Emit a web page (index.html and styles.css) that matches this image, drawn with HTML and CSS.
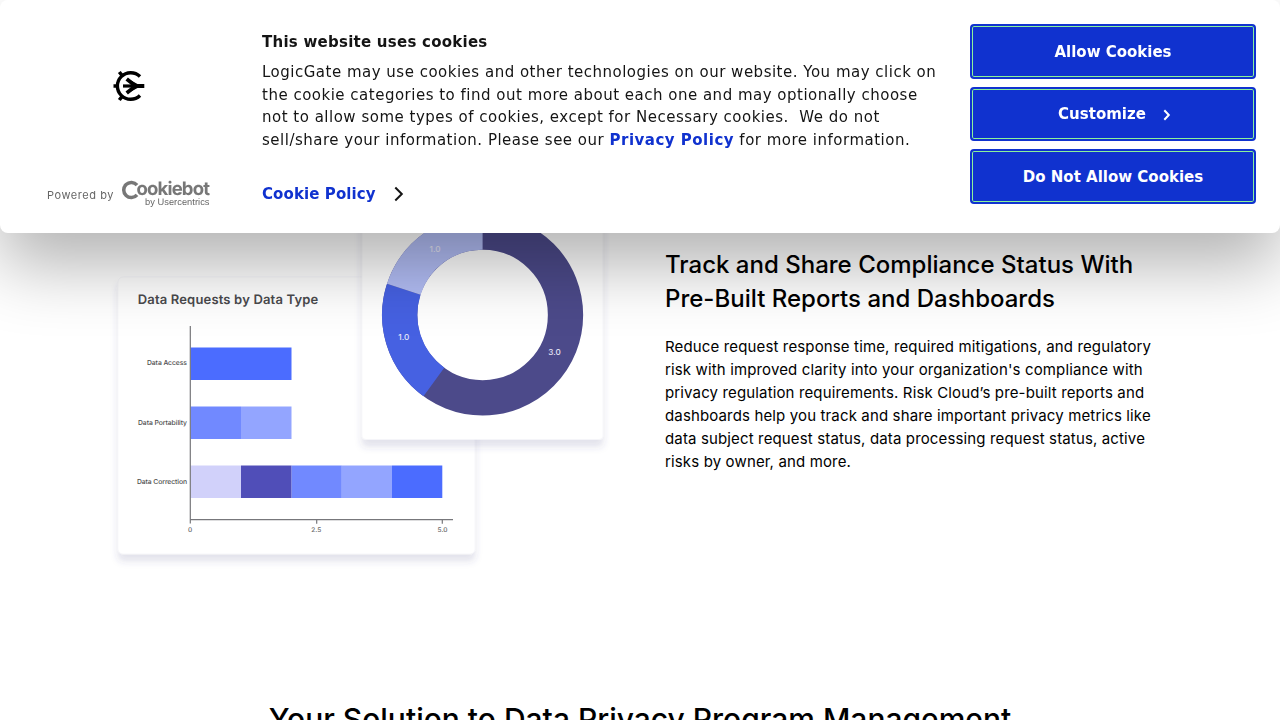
FILE: index.html
```html
<!DOCTYPE html>
<html lang="en">
<head>
<meta charset="utf-8">
<title>Data Privacy</title>
<link rel="stylesheet" href="styles.css">
</head>
<body>
<main class="page">
  <section class="feature">
    <svg class="charts" width="500" height="580" viewBox="110 0 500 580">
      <defs>
        <filter id="card-shadow" x="-10%" y="-10%" width="120%" height="125%">
          <feDropShadow dx="0" dy="7" stdDeviation="3.500" flood-color="#3c3c82" flood-opacity=".15"/>
        </filter>
      </defs>
      <rect class="card" x="118" y="277" width="357" height="277" rx="5"/>
      <text class="chart-title" x="137.700" y="304" textLength="180.500">Data Requests by Data Type</text>
      <g class="row-label">
        <text x="187" y="365" textLength="40">Data Access</text>
        <text x="187" y="424.500" textLength="49">Data Portability</text>
        <text x="187" y="484" textLength="50">Data Correction</text>
      </g>
      <path fill="#4b6cff" d="M190.500 347.500h101v32.500h-101zM392 465.500h50.300v32.500H392z"/>
      <path fill="#7189ff" d="M190.500 406.500h50.500v32.500h-50.500zM291.400 465.500h50.400v32.500h-50.400z"/>
      <path fill="#93a5ff" d="M241 406.500h50.500v32.500H241zM341.800 465.500H392v32.500h-50.200z"/>
      <path fill="#d1d1fa" d="M190.500 465.500H241v32.500h-50.500z"/>
      <path fill="#504eb8" d="M241 465.500h50.400v32.500H241z"/>
      <path fill="none" stroke="#77777b" stroke-width="1.200" d="M190.300 326v197.500M190 519.700h263M316.700 520v3.700M442.300 520v3.700"/>
      <g class="tick-label">
        <text x="190.200" y="532.300">0</text>
        <text x="316.300" y="532.300">2.5</text>
        <text x="442.500" y="532.300">5.0</text>
      </g>
      <rect class="card" x="362" y="160" width="241" height="279.500" rx="4"/>
      <g fill="none" stroke-width="35.300">
        <circle cx="482.600" cy="314.900" r="82.900" stroke="#4c4a8a"/>
        <path stroke="#4661e2" d="M433.870 381.970A82.900 82.900 0 0 1 403.760 289.280"/>
        <path stroke="#b2bdf5" d="M403.760 289.280A82.900 82.900 0 0 1 482.600 232"/>
      </g>
      <g class="slice-label">
        <text x="435" y="252">1.0</text>
        <text x="403.800" y="340">1.0</text>
        <text x="554.500" y="355">3.0</text>
      </g>
    </svg>
    <div class="copy">
      <h2 class="feature-title">Track and Share Compliance Status With<br>Pre-Built Reports and Dashboards</h2>
      <p class="feature-text">Reduce request response time, required mitigations, and regulatory<br>risk with improved clarity into your organization's compliance with<br>privacy regulation requirements. Risk Cloud’s pre-built reports and<br>dashboards help you track and share important privacy metrics like<br>data subject request status, data processing request status, active<br>risks by owner, and more.</p>
    </div>
  </section>
  <h2 class="solution-title">Your Solution to Data Privacy Program Management</h2>
</main>

<div class="cookie-dialog" role="dialog">
  <div class="brand">
    <svg class="brand-logo" width="32" height="32" viewBox="0 0 32 32" fill="none" stroke="#000">
      <path stroke-width="3.400" d="M27 6.500A13.300 13.300 0 1 0 27 25.500"/>
      <path stroke-width="3.600" d="M.5 16H5M6.300 2L9.500 6M6.300 30L9.500 26"/>
      <path stroke-width="3.200" d="M10 16h15"/>
      <path stroke-width="3.800" d="M13.700 9L22.500 16L13.700 23"/>
      <path fill="#000" stroke="none" d="M18 10.500L24.500 14H31.300V18H24.500L18 21.500z"/>
    </svg>
    <div class="powered">
      <span class="powered-text">Powered by</span>
      <svg class="cookiebot" width="92" height="30" viewBox="120 179 92 30">
        <path fill="none" stroke="#777" stroke-width="3.500" d="M137 185.200A7.500 7.500 0 1 0 137 194.800"/>
        <text class="wordmark" x="136.500" y="195.400" textLength="73.500">ookiebot</text>
        <text class="byline" x="145" y="205" textLength="64.500">by Usercentrics</text>
      </svg>
    </div>
  </div>
  <div class="message">
    <h2 class="message-title">This website uses cookies</h2>
    <p class="message-text">LogicGate may use cookies and other technologies on our website. You may click on<br>the cookie categories to find out more about each one and may optionally choose<br>not to allow some types of cookies, except for Necessary cookies.&nbsp; We do not<br>sell/share your information. Please see our <b class="link">Privacy Policy</b> for more information.</p>
    <div class="policy"><span class="policy-link">Cookie Policy</span><svg width="10" height="16" viewBox="0 0 10 16"><path fill="none" stroke="#141414" stroke-width="2" d="M1.300 1.500L7.800 8L1.300 14.500"/></svg></div>
  </div>
  <div class="actions">
    <button class="action allow">Allow Cookies</button>
    <button class="action customize">Customize<svg class="chevron" width="8" height="12" viewBox="0 0 8 12"><path fill="none" stroke="#fff" stroke-width="2" d="M1.300 1.300L5.800 6L1.300 10.700"/></svg></button>
    <button class="action deny">Do Not Allow Cookies</button>
  </div>
</div>
</body>
</html>
```
FILE: styles.css
```css
* { box-sizing: border-box; }
body { margin: 0; height: 720px; overflow: hidden; background: #fff; color: #000; font-family: Inter, sans-serif; }
h2, p { margin: 0; }
.page { height: 720px; overflow: hidden; }
.feature { display: flex; gap: 55px; padding-left: 110px; }
.charts { flex: none; display: block; text-rendering: geometricPrecision; }
.card { fill: #fff; stroke: #f4f4f8; stroke-width: .6; filter: url(#card-shadow); }
.chart-title { font-size: 13px; font-weight: 600; fill: #4a4a4d; }
.row-label { font-size: 6.800px; font-weight: 500; fill: #4c4c4c; text-anchor: end; }
.tick-label { font-size: 6.500px; font-weight: 500; fill: #666; text-anchor: middle; }
.slice-label { font-size: 8.200px; font-weight: 500; fill: #e8e8f8; text-anchor: middle; }
.copy { padding-top: 248px; white-space: nowrap; }
.feature-title { font-size: 24px; line-height: 34px; font-weight: 500; letter-spacing: .01px; }
.feature-text { margin-top: 19px; font-size: 15px; line-height: 23px; letter-spacing: .14px; }
.solution-title { margin-top: 118px; text-align: center; font-size: 30px; line-height: 42px; font-weight: 500; }
.cookie-dialog { position: fixed; top: 0; left: 0; display: flex; width: 1280px; height: 233px; border-radius: 8px; background: #fff; color: #141414; box-shadow: 0 32px 68px rgba(0, 0, 0, .3); font: 15px/22.500px "DejaVu Sans", sans-serif; }
.brand { width: 262px; padding: 70px 0 0 47px; }
.brand-logo { display: block; margin-left: 66px; }
.powered { display: flex; align-items: center; gap: 5px; margin-top: 77px; }
.powered-text { width: 68px; padding-top: 1px; font: 11px/16px Inter, sans-serif; letter-spacing: .55px; color: #666; white-space: nowrap; }
.cookiebot { text-rendering: geometricPrecision; }
.wordmark { font: 700 18.500px Inter, sans-serif; fill: #777; }
.byline { font: 9.300px "Liberation Sans", sans-serif; fill: #666; }
.message { width: 708px; padding-top: 31px; white-space: nowrap; }
.message-title { font-size: 15px; line-height: 23px; letter-spacing: .25px; }
.message-text { margin-top: 7px; letter-spacing: .5px; line-height: 22.500px; }
.link, .policy-link { color: #1032cf; font-weight: 700; }
.link { letter-spacing: .5px; }
.policy-link { letter-spacing: .1px; }
.policy { display: flex; align-items: center; gap: 18px; margin-top: 32px; }
.actions { display: flex; flex-direction: column; gap: 8px; width: 286px; padding-top: 24px; }
.action { display: flex; align-items: center; justify-content: center; height: 54.600px; padding: 0; border: 2px solid #1032cf; border-radius: 4px; background: #1032cf; box-shadow: inset 0 0 0 1px #8cf29a; color: #fff; font: 700 15px "DejaVu Sans", sans-serif; }
.allow, .deny { padding-top: 1px; }
.customize { padding-left: 3px; }
.chevron { margin: 3px 0 0 17px; }
```
